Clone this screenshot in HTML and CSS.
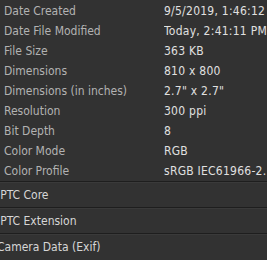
FILE: index.html
```html
<!DOCTYPE html>
<html>
<head>
<meta charset="utf-8">
<link rel="stylesheet" href="styles.css">
</head>
<body>
<div class="panel">
  <div class="props">
    <div class="label">Date Created</div><div class="value">9/5/2019, 1:46:12 PM</div>
    <div class="label">Date File Modified</div><div class="value">Today, 2:41:11 PM</div>
    <div class="label">File Size</div><div class="value">363 KB</div>
    <div class="label">Dimensions</div><div class="value">810 x 800</div>
    <div class="label">Dimensions (in inches)</div><div class="value">2.7" x 2.7"</div>
    <div class="label">Resolution</div><div class="value">300 ppi</div>
    <div class="label">Bit Depth</div><div class="value">8</div>
    <div class="label">Color Mode</div><div class="value">RGB</div>
    <div class="label">Color Profile</div><div class="value">sRGB IEC61966-2.1</div>
  </div>
  <div class="section"><span class="title">IPTC Core</span></div>
  <div class="section"><span class="title">IPTC Extension</span></div>
  <div class="section"><span class="title">Camera Data (Exif)</span></div>
</div>
</body>
</html>
```
FILE: styles.css
```css
html, body {
  margin: 0;
  padding: 0;
  background: #323232;
  overflow: hidden;
}
.panel {
  width: 267px;
  height: 260px;
  overflow: hidden;
  padding-top: 1px;
  box-sizing: border-box;
  font-family: "DejaVu Sans Condensed", "DejaVu Sans", sans-serif;
  font-size: 12px;
  white-space: nowrap;
}
.props {
  display: grid;
  grid-template-columns: 164px 1fr;
  grid-auto-rows: 20px;
  align-items: center;
}
.label {
  color: #b2b2b2;
  padding-left: 4px;
}
.value {
  color: #e0e0e0;
  letter-spacing: 0.25px;
  overflow: hidden;
}
.section {
  height: 25px;
  border-top: 1px solid #1e1e1e;
  box-shadow: inset 0 1px 0 #3a3a3a;
  display: flex;
  align-items: center;
  overflow: hidden;
}
.title {
  color: #d6d6d6;
  margin-left: -3px;
}
```
